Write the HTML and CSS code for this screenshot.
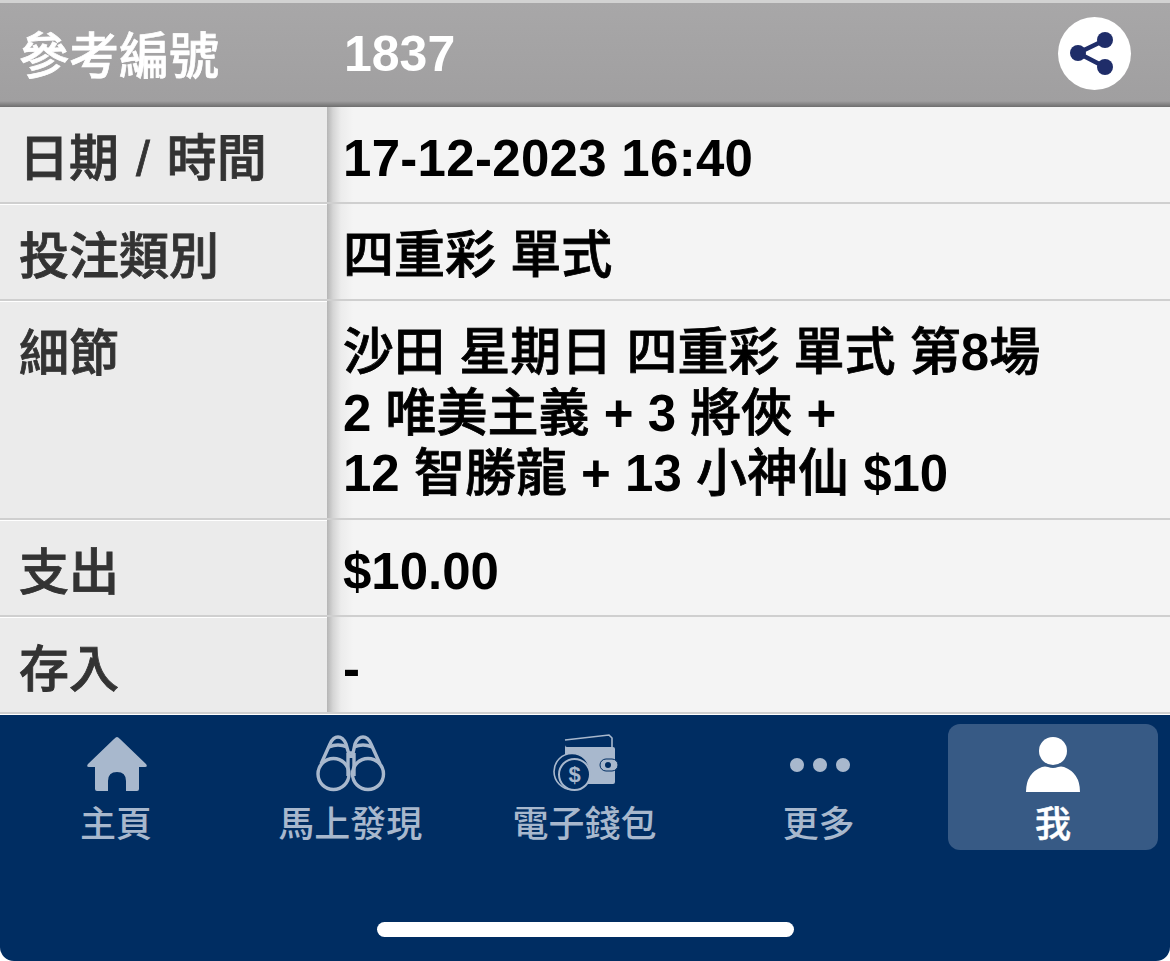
FILE: index.html
```html
<!DOCTYPE html>
<html lang="zh-Hant">
<head>
    <meta charset="UTF-8">
    <meta name="viewport" content="width=device-width, initial-scale=1.0">
    <title>參考編號 1837</title>
    <link rel="stylesheet" href="styles.css">
</head>
<body>
    <div class="app">
        <div class="ref-header">
            <div class="ref-label">參考編號</div>
            <div class="ref-number">1837</div>
            <button class="share-btn" type="button" aria-label="share">
                <svg viewBox="0 0 73 73" width="73" height="73">
                    <path d="M20 36 L47 23 M20 36 L47 50" stroke="#1f2d69" stroke-width="4.5" fill="none"></path>
                    <circle cx="20" cy="36" r="8" fill="#1f2d69"></circle>
                    <circle cx="47" cy="23" r="8" fill="#1f2d69"></circle>
                    <circle cx="47" cy="50" r="8" fill="#1f2d69"></circle>
                </svg>
            </button>
        </div>
        <div class="detail-table">
            <div class="row">
                <div class="label">日期 / 時間</div>
                <div class="value value-date">17-12-2023 16:40</div>
            </div>
            <div class="row">
                <div class="label">投注類別</div>
                <div class="value"><span class="zh">四重彩</span> <span class="zh">單式</span></div>
            </div>
            <div class="row row-tall">
                <div class="label">細節</div>
                <div class="value"><span class="zh">沙田</span> <span class="zh">星期日</span> <span class="zh">四重彩</span> <span class="zh">單式</span> <span class="zh">第</span>8<span class="zh">場</span><br>2 <span class="zh">唯美主義</span> + 3 <span class="zh">將俠</span> +<br>12 <span class="zh">智勝龍</span> + 13 <span class="zh">小神仙</span> $10</div>
            </div>
            <div class="row">
                <div class="label">支出</div>
                <div class="value">$10.00</div>
            </div>
            <div class="row">
                <div class="label">存入</div>
                <div class="value">-</div>
            </div>
        </div>
        <nav class="tab-bar">
            <div class="tabs">
                <a class="tab">
                    <svg class="tab-icon" viewBox="0 0 70 64" width="70" height="64">
                        <path d="M35 7 Q36 7 38 9 L64 34 Q66 37 63 37 L57 37 L57 59 Q57 61 55 61 L44 61 L44 51 Q44 42 35 42 Q26 42 26 51 L26 61 L15 61 Q13 61 13 59 L13 37 L7 37 Q4 37 6 34 L32 9 Q34 7 35 7 Z" fill="#a8b8cd"></path>
                    </svg>
                    <span>主頁</span>
                </a>
                <a class="tab">
                    <svg class="tab-icon" viewBox="0 0 70 64" width="70" height="64" fill="none" stroke="#a8b8cd" stroke-width="3.4">
                        <circle cx="17.5" cy="44" r="15.5"></circle>
                        <circle cx="52" cy="44" r="15.5"></circle>
                        <path d="M5 34 L14 14 Q17 7 22 7 Q27 7 30 14 L34 28 M64 34 L55 14 Q52 7 47 7 Q42 7 39 14 L36 28"></path>
                        <path d="M13 17 Q22 13 31 17 M56 17 Q47 13 38 17"></path>
                        <path d="M32 23 L38 23 M32 23 L32 46 M38 23 L38 46"></path>
                    </svg>
                    <span>馬上發現</span>
                </a>
                <a class="tab">
                    <svg class="tab-icon" viewBox="0 0 70 64" width="70" height="64">
                        <path d="M14 10 L58 5 L61 8 L61 17" fill="none" stroke="#a8b8cd" stroke-width="1.6"></path>
                        <path d="M14 10 L14 15 Q14 17 16 17 L62 17 Q64 17 64 19 L64 52 Q64 54 62 54 L30 54 L14 30 Z" fill="#a8b8cd"></path>
                        <circle cx="21" cy="41.5" r="18" fill="#002d62" stroke="#a8b8cd" stroke-width="1.6"></circle>
                        <circle cx="23.5" cy="44.5" r="15.5" fill="#002d62" stroke="#a8b8cd" stroke-width="2"></circle>
                        <rect x="49" y="29" width="18" height="12" rx="6" fill="#a8b8cd" stroke="#002d62" stroke-width="1"></rect>
                        <circle cx="57" cy="35" r="3" fill="#002d62"></circle>
                        <text x="23.5" y="52" class="coin-mark">$</text>
                    </svg>
                    <span>電子錢包</span>
                </a>
                <a class="tab">
                    <svg class="tab-icon" viewBox="0 0 70 64" width="70" height="64" fill="#a8b8cd">
                        <circle cx="12" cy="35" r="7"></circle>
                        <circle cx="35" cy="35" r="7"></circle>
                        <circle cx="58" cy="35" r="7"></circle>
                    </svg>
                    <span>更多</span>
                </a>
                <a class="tab tab-active">
                    <svg class="tab-icon" viewBox="0 0 70 64" width="70" height="64" fill="#fff">
                        <circle cx="35" cy="21" r="14"></circle>
                        <path d="M8 62 Q8 43 24 37 Q27 36 30 37 Q35 39 40 37 Q43 36 46 37 Q62 43 62 62 Z"></path>
                    </svg>
                    <span>我</span>
                </a>
            </div>
            <div class="home-indicator"></div>
        </nav>
    </div>
</body>
</html>
```

FILE: styles.css
```css
html, body {
    height: 100%;
    margin: 0;
    padding: 0;
    overflow: hidden;
    background-color: #fff;
}
.app {
    display: flex;
    flex-direction: column;
    height: 961px;
    font-family: "Liberation Sans", "Noto Sans CJK TC", sans-serif;
}
.ref-header {
    display: flex;
    align-items: center;
    box-sizing: border-box;
    height: 107px;
    padding: 0 39px 0 19px;
    color: #fff;
    font-size: 50px;
    font-weight: 500;
    background: linear-gradient(#d2d2d2 0, #d2d2d2 3px, #a8a7a8 3px, #a09fa0 101px, #6e6e6e 107px);
}
.ref-label {
    width: 325px;
    padding-bottom: 4px;
    -webkit-text-stroke: 0.7px #fff;
}
.ref-number {
    flex: 1;
    font-weight: bold;
}
.share-btn {
    width: 73px;
    height: 73px;
    padding: 0;
    margin-bottom: 1px;
    border: none;
    border-radius: 50%;
    background-color: #fff;
}
.share-btn svg {
    display: block;
}
.row {
    display: flex;
    height: 97px;
}
.row-tall {
    height: 219px;
}
.label {
    box-sizing: border-box;
    width: 327px;
    padding: 22px 0 0 19px;
    font-size: 50px;
    line-height: 60px;
    font-weight: 500;
    word-spacing: 3px;
    color: #333;
    -webkit-text-stroke: 0.8px #333;
    background-color: #ebebeb;
    border-top: 1px solid #fff;
    border-bottom: 2px solid #cfcfcf;
}
.value {
    flex: 1;
    box-sizing: border-box;
    padding: 22px 0 0 16px;
    font-size: 51px;
    line-height: 60.5px;
    font-weight: bold;
    color: #000;
    background: linear-gradient(90deg, #b5b5b5 0, #d5d5d5 6px, #ececec 14px, #f4f4f4 26px);
    border-bottom: 2px solid #cfcfcf;
}
.value-date {
    letter-spacing: 0.3px;
}
.zh {
    font-weight: 500;
    -webkit-text-stroke: 0.8px #000;
}
.row:first-child .label {
    border-top: none;
}
.tab-bar {
    flex: 1;
    display: flex;
    flex-direction: column;
    margin-top: 1px;
    background-color: #002d62;
    border-radius: 0 0 14px 14px;
}
.tabs {
    display: flex;
    padding: 9px 12px 0 0;
}
.tab {
    flex: 1;
    display: flex;
    flex-direction: column;
    align-items: center;
    box-sizing: border-box;
    height: 126px;
    padding-top: 6px;
    color: #a8b8cd;
    font-size: 36px;
    line-height: 48px;
    font-weight: 500;
}
.tab span {
    margin-top: 7px;
    margin-right: 2px;
}
.tab-icon {
    display: block;
}
.tab-active {
    color: #fff;
    background-color: #375a85;
    border-radius: 12px;
    flex: 0 0 210px;
    margin-left: 11px;
}
.tab-active span {
    margin-right: 0;
    -webkit-text-stroke: 0.5px #fff;
}
.coin-mark {
    font-size: 22px;
    font-weight: bold;
    fill: #a8b8cd;
    text-anchor: middle;
}
.home-indicator {
    align-self: flex-start;
    width: 417px;
    height: 15px;
    margin: 72px 0 0 377px;
    border-radius: 8px;
    background-color: #fff;
}
```
